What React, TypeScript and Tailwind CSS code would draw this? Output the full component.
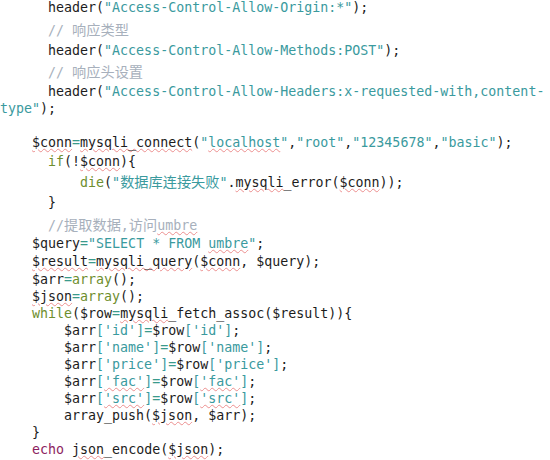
type Kind = "n" | "s" | "c" | "k" | "m" | "o";

interface Seg {
  t: string;
  k?: Kind;
  w?: boolean; // spell-check squiggle
  z?: boolean; // CJK run
}

interface Line {
  h: string;
  indent: number;
  segs: Seg[];
}

const kindClass: Record<Kind, string> = {
  n: "text-[#1c1c1c]",
  s: "text-[#3a9a9e]",
  c: "text-[#a7b0bc]",
  k: "text-[#6e8e2e]",
  m: "text-[#8c1d5e]",
  o: "text-[#3a9a8c]",
};

const arrRow = (key: string, squiggle = false): Seg[] => [
  { t: "$arr" },
  { t: "[", k: "s" },
  { t: `'${key}'`, k: "s", w: squiggle },
  { t: "]", k: "s" },
  { t: "=", k: "o" },
  { t: "$row" },
  { t: "[", k: "s" },
  { t: `'${key}'`, k: "s", w: squiggle },
  { t: "]", k: "s" },
  { t: ";" },
];

const lines: Line[] = [
  {
    h: "h-[22px] leading-[22px]",
    indent: 6,
    segs: [{ t: "header(" }, { t: '"Access-Control-Allow-Origin:*"', k: "s" }, { t: ");" }],
  },
  {
    h: "h-[21px] leading-[21px]",
    indent: 6,
    segs: [{ t: "// ", k: "c" }, { t: "响应类型", k: "c", z: true }],
  },
  {
    h: "h-[21px] leading-[21px]",
    indent: 6,
    segs: [{ t: "header(" }, { t: '"Access-Control-Allow-Methods:POST"', k: "s" }, { t: ");" }],
  },
  {
    h: "h-[21px] leading-[21px]",
    indent: 6,
    segs: [{ t: "// ", k: "c" }, { t: "响应头设置", k: "c", z: true }],
  },
  {
    h: "h-[19px] leading-[19px]",
    indent: 6,
    segs: [{ t: "header(" }, { t: '"Access-Control-Allow-Headers:x-requested-with,content-', k: "s" }],
  },
  {
    h: "h-[16px] leading-[16px]",
    indent: 0,
    segs: [{ t: 'type"', k: "s" }, { t: ");" }],
  },
  { h: "h-[17px] leading-[17px]", indent: 0, segs: [] },
  {
    h: "h-[18px] leading-[18px]",
    indent: 4,
    segs: [
      { t: "$conn", w: true },
      { t: "=", k: "o" },
      { t: "mysqli_connect", w: true },
      { t: "(" },
      { t: '"', k: "s" },
      { t: "localhost", k: "s", w: true },
      { t: '"', k: "s" },
      { t: "," },
      { t: '"root"', k: "s" },
      { t: "," },
      { t: '"12345678"', k: "s" },
      { t: "," },
      { t: '"basic"', k: "s" },
      { t: ");" },
    ],
  },
  {
    h: "h-[19px] leading-[19px]",
    indent: 6,
    segs: [{ t: "if", k: "k" }, { t: "(!" }, { t: "$conn", w: true }, { t: "){" }],
  },
  {
    h: "h-[21px] leading-[21px]",
    indent: 10,
    segs: [
      { t: "die", k: "k" },
      { t: "(" },
      { t: '"', k: "s" },
      { t: "数据库连接失败", k: "s", z: true },
      { t: '"', k: "s" },
      { t: "." },
      { t: "mysqli", w: true },
      { t: "_error(" },
      { t: "$conn", w: true },
      { t: "));" },
    ],
  },
  { h: "h-[22px] leading-[22px]", indent: 6, segs: [{ t: "}" }] },
  {
    h: "h-[21px] leading-[21px]",
    indent: 6,
    segs: [
      { t: "//", k: "c" },
      { t: "提取数据", k: "c", z: true },
      { t: ",", k: "c" },
      { t: "访问", k: "c", z: true },
      { t: "umbre", k: "c", w: true },
    ],
  },
  {
    h: "h-[18px] leading-[18px]",
    indent: 4,
    segs: [
      { t: "$query" },
      { t: "=", k: "o" },
      { t: '"SELECT * FROM ', k: "s" },
      { t: "umbre", k: "s", w: true },
      { t: '"', k: "s" },
      { t: ";" },
    ],
  },
  {
    h: "h-[18px] leading-[18px]",
    indent: 4,
    segs: [
      { t: "$result", w: true },
      { t: "=", k: "o" },
      { t: "mysqli_query", w: true },
      { t: "(" },
      { t: "$conn", w: true },
      { t: ", $query);" },
    ],
  },
  {
    h: "h-[17px] leading-[17px]",
    indent: 4,
    segs: [{ t: "$arr" }, { t: "=", k: "o" }, { t: "array", k: "k" }, { t: "();" }],
  },
  {
    h: "h-[17px] leading-[17px]",
    indent: 4,
    segs: [{ t: "$json", w: true }, { t: "=", k: "o" }, { t: "array", k: "k" }, { t: "();" }],
  },
  {
    h: "h-[17px] leading-[17px]",
    indent: 4,
    segs: [
      { t: "while", k: "k" },
      { t: "(" },
      { t: "$row" },
      { t: "=", k: "o" },
      { t: "mysqli", w: true },
      { t: "_fetch_assoc(" },
      { t: "$result" },
      { t: ")){" },
    ],
  },
  { h: "h-[17px] leading-[17px]", indent: 8, segs: arrRow("id") },
  { h: "h-[17px] leading-[17px]", indent: 8, segs: arrRow("name") },
  { h: "h-[17px] leading-[17px]", indent: 8, segs: arrRow("price") },
  { h: "h-[17px] leading-[17px]", indent: 8, segs: arrRow("fac", true) },
  { h: "h-[17px] leading-[17px]", indent: 8, segs: arrRow("src", true) },
  {
    h: "h-[17px] leading-[17px]",
    indent: 8,
    segs: [{ t: "array_push(" }, { t: "$json", w: true }, { t: ", $arr);" }],
  },
  { h: "h-[17px] leading-[17px]", indent: 4, segs: [{ t: "}" }] },
  {
    h: "h-[17px] leading-[17px]",
    indent: 4,
    segs: [
      { t: "echo", k: "m" },
      { t: " " },
      { t: "json", w: true },
      { t: "_encode(" },
      { t: "$json", w: true },
      { t: ");" },
    ],
  },
];

function CodeLine({ line }: { line: Line }) {
  return (
    <div className={`${line.h} whitespace-pre`}>
      {" ".repeat(line.indent)}
      {line.segs.map((s, i) => (
        <span
          key={i}
          className={[
            kindClass[s.k ?? "n"],
            s.w ? "underline decoration-wavy decoration-[#ec8f8f] decoration-1 underline-offset-[1px]" : "",
            s.z ? "text-[14.2px] font-['Noto_Sans_CJK_SC',sans-serif]" : "",
          ].join(" ")}
        >
          {s.t}
        </span>
      ))}
    </div>
  );
}

export default function App() {
  return (
    <div className="w-[550px] h-[460px] overflow-hidden bg-white">
      <div className="-mt-[3px] text-[13.3px] font-['DejaVu_Sans_Mono','Noto_Sans_CJK_SC',monospace]">
        {lines.map((line, i) => (
          <CodeLine key={i} line={line} />
        ))}
      </div>
    </div>
  );
}
